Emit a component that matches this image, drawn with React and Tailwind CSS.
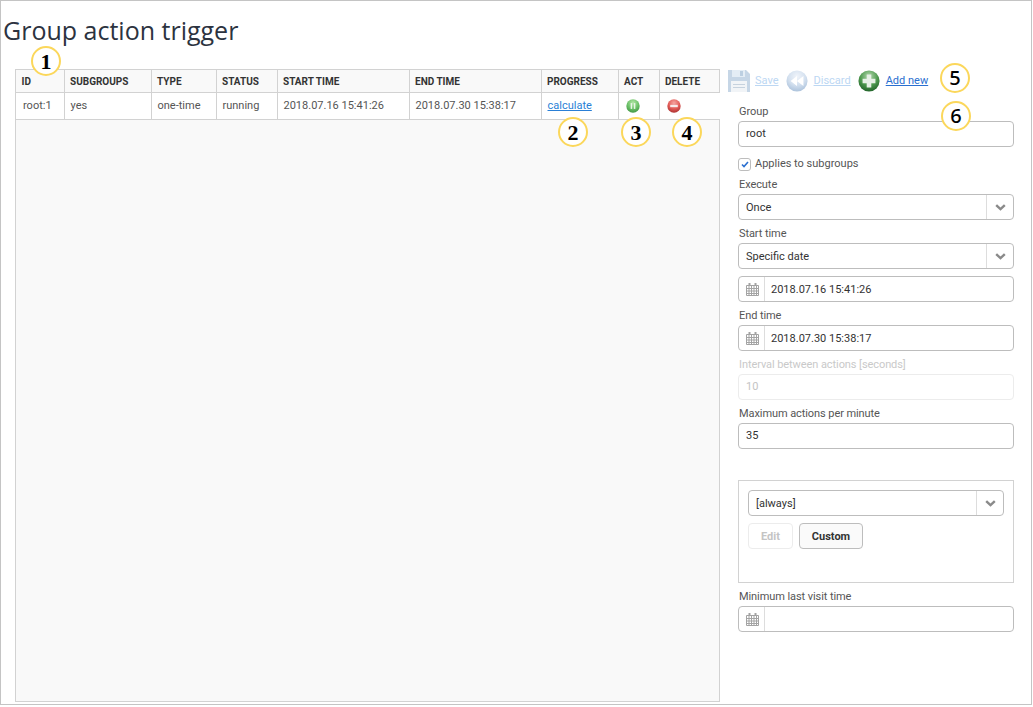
const columns = [
  { label: "ID", width: 48 },
  { label: "Subgroups", width: 87 },
  { label: "Type", width: 65 },
  { label: "Status", width: 61 },
  { label: "Start time", width: 132 },
  { label: "End time", width: 132 },
  { label: "Progress", width: 77 },
  { label: "Act", width: 41 },
  { label: "Delete", width: 61 },
];

const Sphere = ({ id, size, light, mid, dark, children }) => (
  <svg width={size} height={size} viewBox="0 0 24 24" className="shrink-0">
    <defs>
      <radialGradient id={id} cx="50%" cy="28%" r="75%">
        <stop offset="0%" stopColor={light} />
        <stop offset="55%" stopColor={mid} />
        <stop offset="100%" stopColor={dark} />
      </radialGradient>
    </defs>
    <circle cx="12" cy="12" r="11.5" fill={`url(#${id})`} />
    {children}
  </svg>
);

const SaveIcon = () => (
  <svg width="22" height="24" viewBox="0 0 22 24" className="shrink-0">
    <path d="M0 1h18l4 4v18H0z" fill="#c6d6e6" />
    <rect x="4" y="1" width="13" height="7" fill="#e4edf5" />
    <rect x="12" y="2" width="3" height="5" fill="#bccfe1" />
    <rect x="3" y="12" width="16" height="11" fill="#f1f4f7" />
    <rect x="5" y="15" width="12" height="1" fill="#c6d2de" />
    <rect x="5" y="18" width="12" height="1" fill="#c6d2de" />
  </svg>
);

const CalendarIcon = () => (
  <svg width="13" height="13" viewBox="0 0 13 13" className="shrink-0">
    <path d="M0.5 2.5h12v10h-12z M0.5 5.5h12 M0.5 8h12 M0.5 10.5h12 M3 2.5v10 M5.5 2.5v10 M8 2.5v10 M10.5 2.5v10" fill="none" stroke="#a3a3a3" strokeWidth="1" />
    <rect x="2.5" y="0" width="2" height="3" fill="#a3a3a3" />
    <rect x="8.5" y="0" width="2" height="3" fill="#a3a3a3" />
  </svg>
);

const Chevron = () => (
  <svg width="11" height="7" viewBox="0 0 11 7">
    <path d="M1.2 1.2 5.5 5.2 9.8 1.2" fill="none" stroke="#8a8a8a" strokeWidth="2.4" />
  </svg>
);

const Label = ({ children, disabled }) => (
  <label className={`block h-[17px] pl-px text-[11px] leading-[15px] tracking-[-0.08px] ${disabled ? "text-[#c9c9c9]" : "text-[#555555]"}`}>
    {children}
  </label>
);

const TextBox = ({ value, disabled }) => (
  <div
    className={`flex h-[26px] items-center rounded-[4px] border px-[7px] text-[11px] ${
      disabled ? "border-[#ececec] text-[#c4c4c4]" : "border-[#bdbdbd] text-[#333333]"
    }`}
  >
    {value}
  </div>
);

const SelectBox = ({ value }) => (
  <div className="flex h-[26px] items-center rounded-[4px] border border-[#bdbdbd] text-[11px] text-[#333333]">
    <span className="flex-1 px-[7px] pt-[2px]">{value}</span>
    <span className="flex h-full w-[27px] items-center justify-center border-l border-[#dddddd]">
      <Chevron />
    </span>
  </div>
);

const DateBox = ({ value }) => (
  <div className="flex h-[26px] items-center rounded-[4px] border border-[#bdbdbd] text-[11px] text-[#333333]">
    <span className="flex h-full w-[26px] items-center justify-center border-r border-[#dddddd] pl-px">
      <CalendarIcon />
    </span>
    <span className="px-[6px] pt-[2px]">{value}</span>
  </div>
);

const Marker = ({ n, className, sans }) => (
  <div
    className={`absolute flex h-[30px] w-[30px] items-center justify-center rounded-full border-2 border-[#fbd75b] bg-white text-black ${
      sans ? "font-['Noto_Sans',sans-serif] text-[20px] font-medium" : "font-['Liberation_Serif',serif] text-[22px] font-bold"
    } ${className}`}
  >
    {n}
  </div>
);

const App = () => {
  return (
    <div className="relative h-[705px] w-[1032px] overflow-hidden border border-[#c4c4c4] bg-white font-['Roboto',sans-serif]">
      <h1 className="ml-[2px] mt-[12px] h-[34px] font-['Open_Sans',sans-serif] text-[25px] leading-[34px] text-[#2c3340]">
        Group action trigger
      </h1>

      <div className="mt-[22px] flex">
        {/* trigger list */}
        <div className="ml-[14px] h-[633px] w-[705px] border border-[#d2d2d2] bg-[#f9f9f9]">
          <table className="w-full table-fixed border-collapse text-[11px]">
            <colgroup>
              {columns.map((c) => (
                <col key={c.label} style={{ width: c.width }} />
              ))}
            </colgroup>
            <thead>
              <tr className="h-[22px] border-b border-[#d2d2d2]">
                {columns.map((c, i) => (
                  <th
                    key={c.label}
                    className={`${i > 0 ? "border-l" : ""} border-[#d2d2d2] px-[5.5px] pt-[2px] text-left text-[10px] font-bold uppercase text-[#333333]`}
                  >
                    {c.label}
                  </th>
                ))}
              </tr>
            </thead>
            <tbody>
              <tr className="h-[27px] border-b border-[#d2d2d2] bg-white text-[#555555] [&>td]:border-[#d2d2d2] [&>td]:px-[6px] [&>td]:pt-px">
                <td className="pl-[7px]!">root:1</td>
                <td className="border-l">yes</td>
                <td className="border-l">one-time</td>
                <td className="border-l">running</td>
                <td className="border-l">2018.07.16 15:41:26</td>
                <td className="border-l">2018.07.30 15:38:17</td>
                <td className="border-l">
                  <a href="#" className="text-[#2a7fd6] underline">calculate</a>
                </td>
                <td className="border-l">
                  <div className="pl-[1px]">
                    <Sphere id="pause" size={14} light="#b4e6a8" mid="#6cc168" dark="#3f9444">
                      <rect x="8" y="7" width="2.6" height="10" fill="#e8f5e6" />
                      <rect x="13.4" y="7" width="2.6" height="10" fill="#e8f5e6" />
                    </Sphere>
                  </div>
                </td>
                <td className="border-l">
                  <div className="pl-[1px]">
                    <Sphere id="del" size={14} light="#f5a5a0" mid="#e25c58" dark="#a92f2f">
                      <rect x="5.5" y="10" width="13" height="4" fill="#f7e9e9" />
                    </Sphere>
                  </div>
                </td>
              </tr>
            </tbody>
          </table>
        </div>

        {/* edit form */}
        <div className="ml-[8px] w-[287px]">
          <div className="-mt-[1px] flex h-[26px] items-center text-[11px]">
            <SaveIcon />
            <a href="#" className="ml-[5px] text-[#bcd7f3] underline">Save</a>
            <span className="ml-[7px]">
              <Sphere id="discard" size={22} light="#f0f4fa" mid="#d3e0ef" dark="#a9c0da">
                <path d="M12 6.5v11L5 12z M19 6.5v11L12 12z" fill="#ffffff" />
              </Sphere>
            </span>
            <a href="#" className="ml-[6px] text-[#bcd7f3] underline">Discard</a>
            <span className="ml-[7px]">
              <Sphere id="add" size={22} light="#b4d8ae" mid="#4f9a50" dark="#1d5f26">
                <path d="M9.5 5h5v4.5H19v5h-4.5V19h-5v-4.5H5v-5h4.5z" fill="#e6f0e6" />
              </Sphere>
            </span>
            <a href="#" className="ml-[6px] text-[#2a6fd0] underline">Add new</a>
          </div>

          <div className="ml-[10px] mt-[10px] w-[276px]">
            <Label>Group</Label>
            <TextBox value="root" />
            <div className="mt-[10px] flex h-[14px] items-center text-[11px] text-[#555555]">
              <span className="flex h-[13px] w-[13px] items-center justify-center rounded-[3px] border border-[#bdbdbd]">
                <svg width="8" height="7" viewBox="0 0 8 7">
                  <path d="M1 3.5 3 5.5 7 1" fill="none" stroke="#2a6fd0" strokeWidth="1.6" />
                </svg>
              </span>
              <span className="ml-[4px]">Applies to subgroups</span>
            </div>
            <div className="mt-[6px]">
              <Label>Execute</Label>
              <SelectBox value="Once" />
            </div>
            <div className="mt-[6px]">
              <Label>Start time</Label>
              <SelectBox value="Specific date" />
            </div>
            <div className="mt-[7px]">
              <DateBox value="2018.07.16 15:41:26" />
            </div>
            <div className="mt-[6px]">
              <Label>End time</Label>
              <DateBox value="2018.07.30 15:38:17" />
            </div>
            <div className="mt-[6px]">
              <Label disabled>Interval between actions [seconds]</Label>
              <TextBox value="10" disabled />
            </div>
            <div className="mt-[6px]">
              <Label>Maximum actions per minute</Label>
              <TextBox value="35" />
            </div>

            <div className="mt-[31px] h-[103px] border border-[#d2d2d2] px-[9px] pt-[9px]">
              <SelectBox value="[always]" />
              <div className="mt-[7px] flex gap-[6px] text-[11px] font-bold">
                <button className="h-[26px] w-[45px] rounded-[4px] border border-[#ececec] pt-[2px] text-[#c4c4c4]">Edit</button>
                <button className="h-[26px] w-[64px] rounded-[4px] border border-[#bdbdbd] bg-[#fafafa] pt-[2px] text-[#333333]">Custom</button>
              </div>
            </div>

            <div className="mt-[6px]">
              <Label>Minimum last visit time</Label>
              <DateBox value="" />
            </div>
          </div>
        </div>
      </div>

      {/* numbered callouts */}
      <Marker n="1" className="left-[30px] top-[45px]" />
      <Marker n="2" className="left-[557px] top-[116px]" />
      <Marker n="3" className="left-[620px] top-[116px]" />
      <Marker n="4" className="left-[671px] top-[116px]" />
      <Marker n="5" sans className="left-[939px] top-[62px]" />
      <Marker n="6" sans className="left-[940px] top-[100px]" />
    </div>
  );
};

export default App;
